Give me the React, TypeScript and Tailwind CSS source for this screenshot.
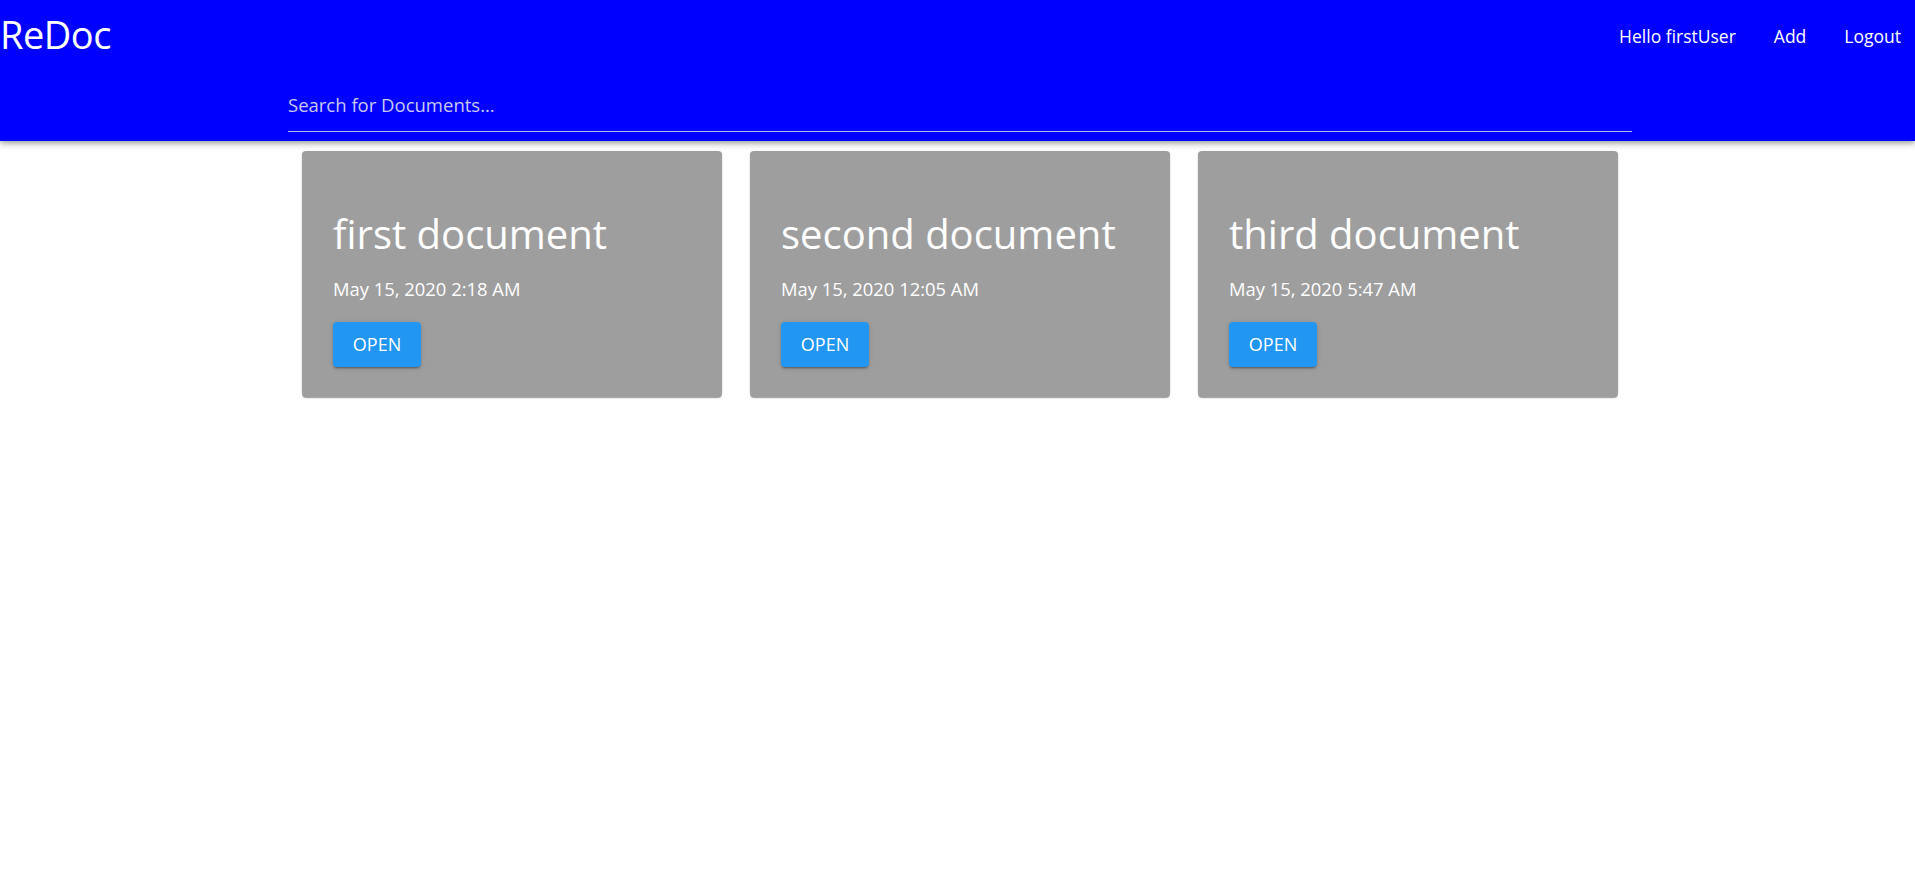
import React from "react";

const docs = [
  { title: "first document", date: "May 15, 2020 2:18 AM" },
  { title: "second document", date: "May 15, 2020 12:05 AM" },
  { title: "third document", date: "May 15, 2020 5:47 AM" },
];

export default function App() {
  return (
    <div
      className="min-h-[893px] bg-white"
      style={{ fontFamily: '"Open Sans", "Noto Sans", sans-serif' }}
    >
      <header className="relative z-10 flex h-[141px] flex-col bg-[#0000ff] text-white shadow-[0_2px_4px_-1px_rgba(0,0,0,0.2),0_4px_5px_0_rgba(0,0,0,0.14),0_1px_10px_0_rgba(0,0,0,0.12)]">
        <div className="flex h-[54px] items-start justify-between">
          <div className="pt-[15px] text-[38px] leading-[39px] tracking-[-0.5px]">ReDoc</div>
          <nav className="flex gap-[38px] pr-[14px] pt-[24px] text-[17.5px] leading-[24px]">
            <span>Hello firstUser</span>
            <span>Add</span>
            <span>Logout</span>
          </nav>
        </div>
        <div className="ml-[288px] mt-[39px] w-[1344px]">
          <div className="border-b border-[#b4b4e6] pb-[14px] text-[18.5px] leading-[24px] text-[#c8c8f5]">
            Search for Documents...
          </div>
        </div>
      </header>
      <main className="ml-[288px] grid w-[1344px] grid-cols-3 pt-[10px]">
        {docs.map((d) => (
          <div key={d.title} className="px-[14px]">
            <div className="h-[246px] rounded-[4px] bg-[#9e9e9e] px-[31px] pt-[59px] pb-[30px] text-white shadow-[0_2px_1px_-1px_rgba(0,0,0,0.2),0_1px_1px_0_rgba(0,0,0,0.14),0_1px_3px_0_rgba(0,0,0,0.12)]">
              <div className="text-[40px] leading-[48px]">{d.title}</div>
              <div className="mt-[19px] text-[18.4px] leading-[24px]">{d.date}</div>
              <button className="mt-[21px] flex h-[45px] w-[88px] items-center justify-center rounded-[4px] bg-[#2196f3] text-[18px] text-white shadow-[0_3px_1px_-2px_rgba(0,0,0,0.2),0_2px_2px_0_rgba(0,0,0,0.14),0_1px_5px_0_rgba(0,0,0,0.12)]">
                OPEN
              </button>
            </div>
          </div>
        ))}
      </main>
    </div>
  );
}
